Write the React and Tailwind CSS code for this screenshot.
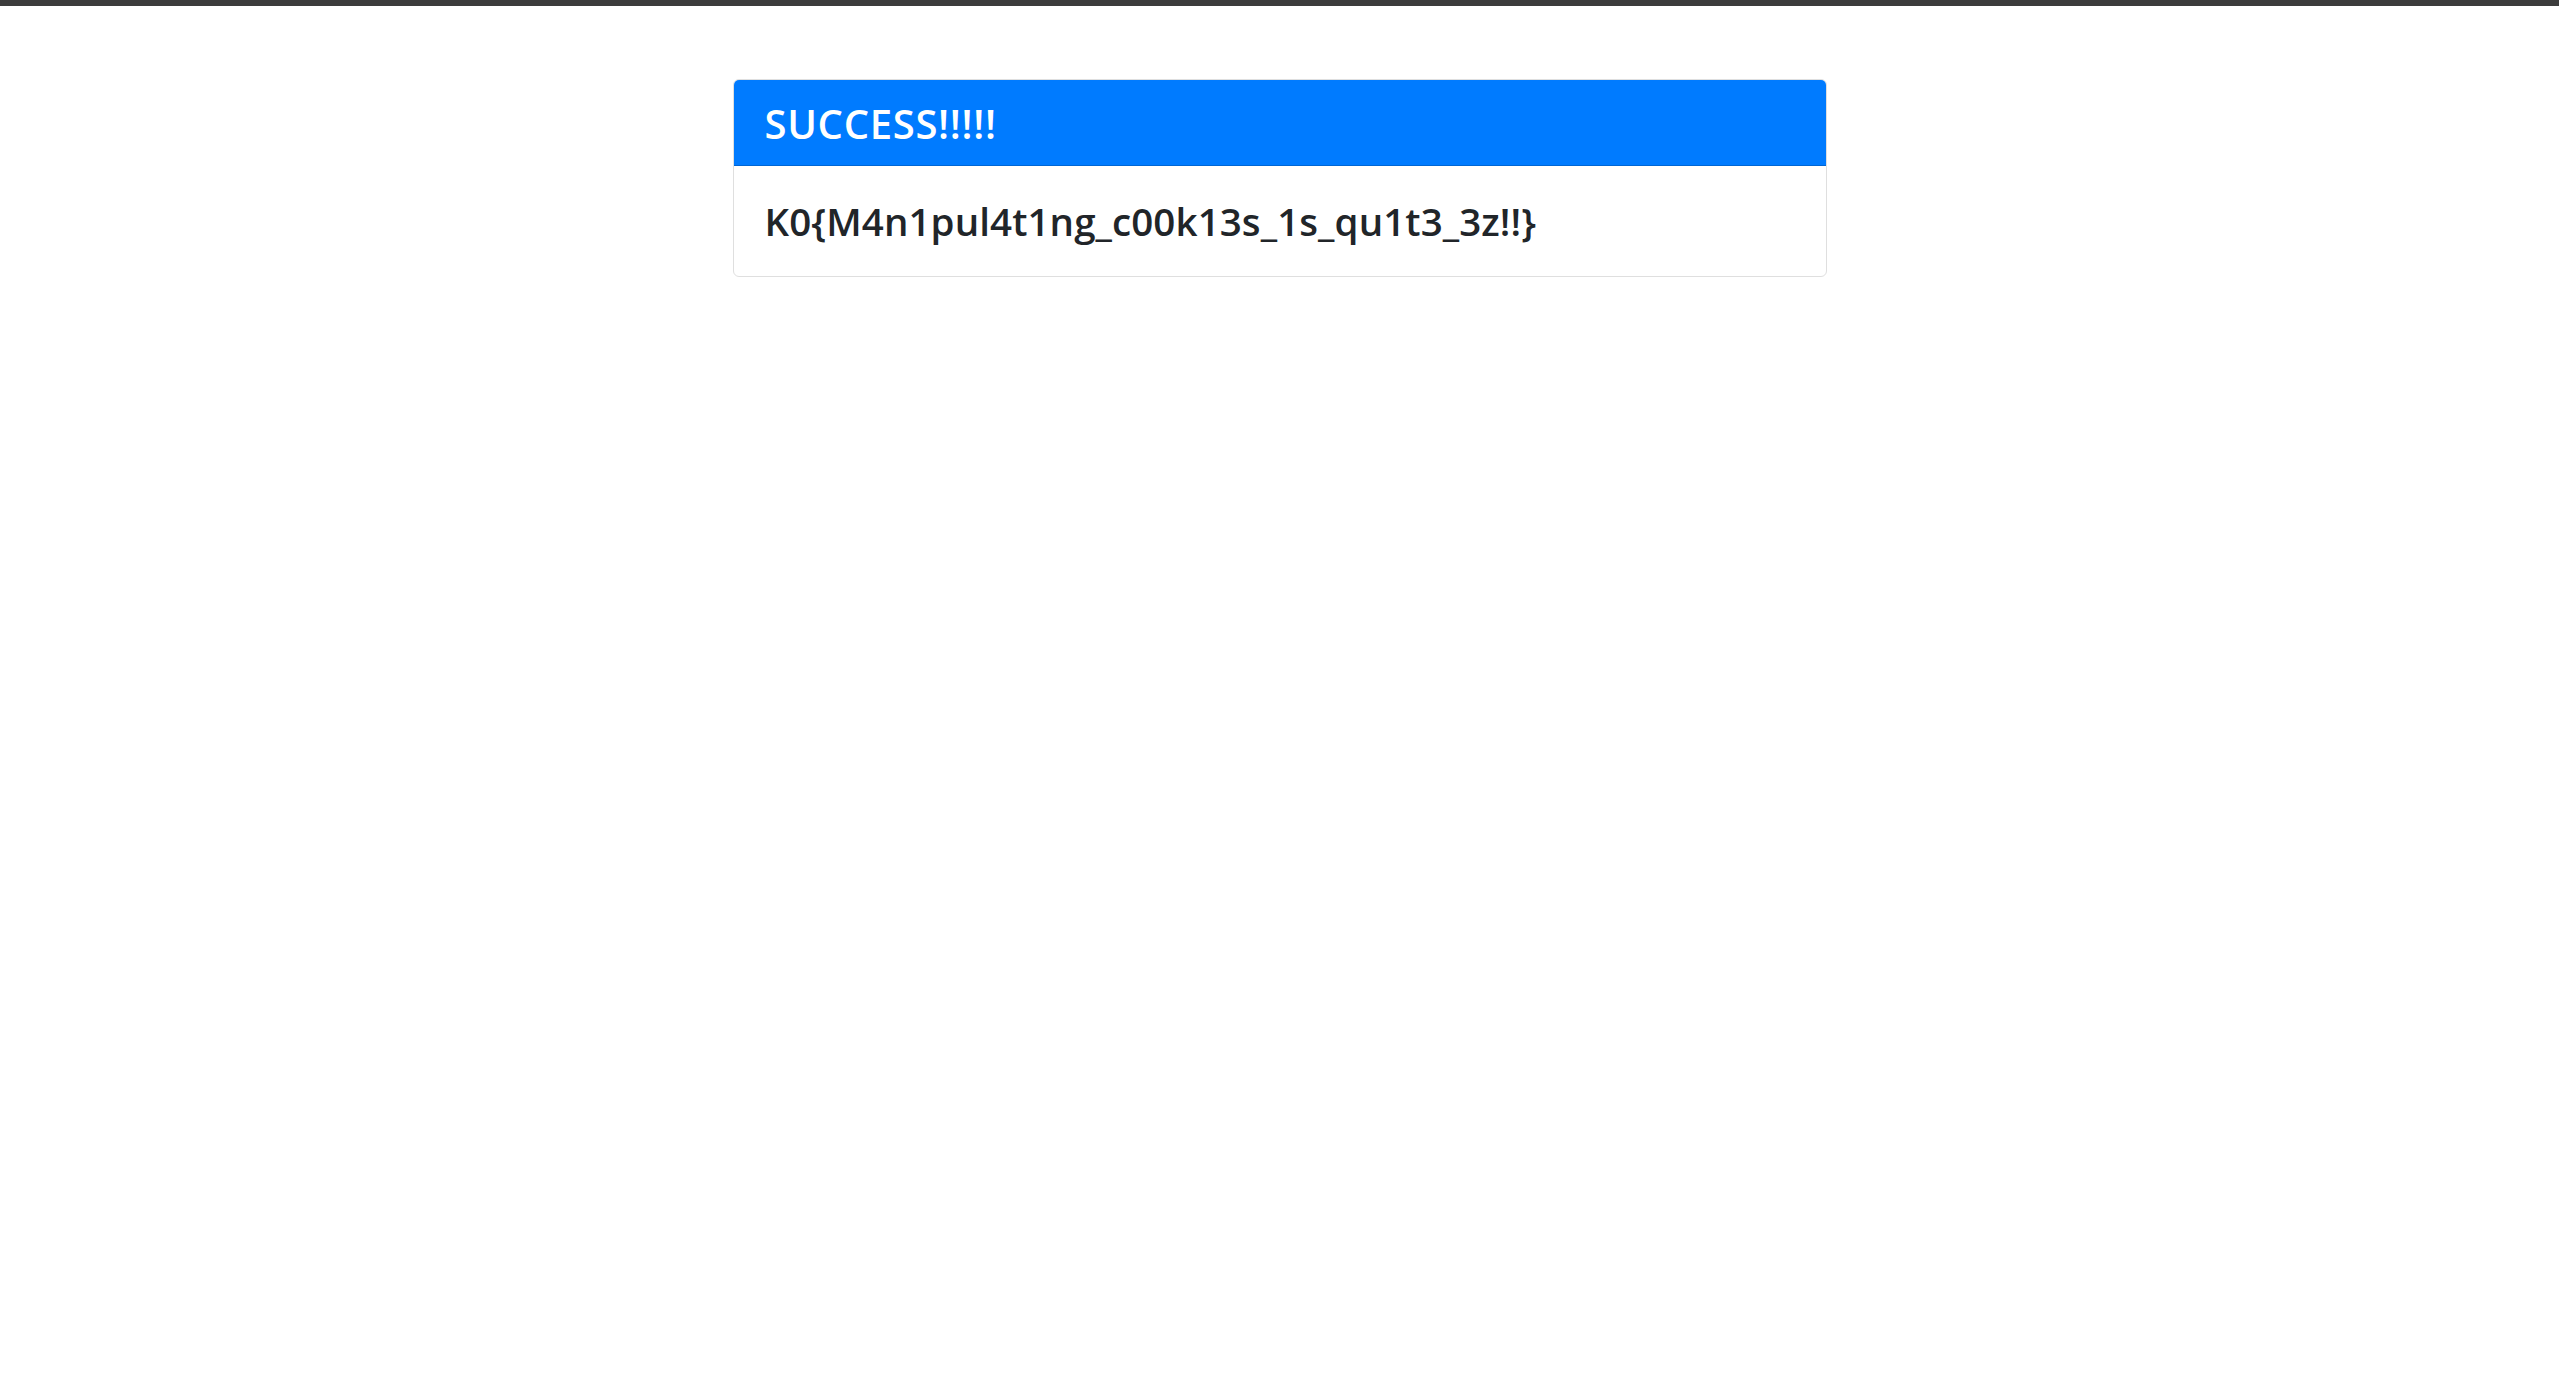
export default function App() {
  return (
    <div className="min-h-screen bg-white font-['Open_Sans','Noto_Sans',sans-serif]">
      <div className="h-[6px] bg-[#3c3c3c]" />
      <div className="pt-[73px]">
        <div className="mx-auto w-[1094px] rounded-[6px] border border-[#dfdfdf] overflow-hidden">
          <div className="bg-[#007bff] border-b border-[#0066d4] px-[31px] pt-[21px] pb-[18px]">
            <h4 className="text-white text-[40px] leading-[46px] font-semibold tracking-[0.7px]">SUCCESS!!!!!</h4>
          </div>
          <div className="px-[31px] pt-[32px] pb-[32px]">
            <h4 className="text-[#212529] text-[38.5px] leading-[46px] font-semibold tracking-[0.1px]">K0{"{"}M4n1pul4t1ng_c00k13s_1s_qu1t3_3z!!{"}"}</h4>
          </div>
        </div>
      </div>
    </div>
  )
}
